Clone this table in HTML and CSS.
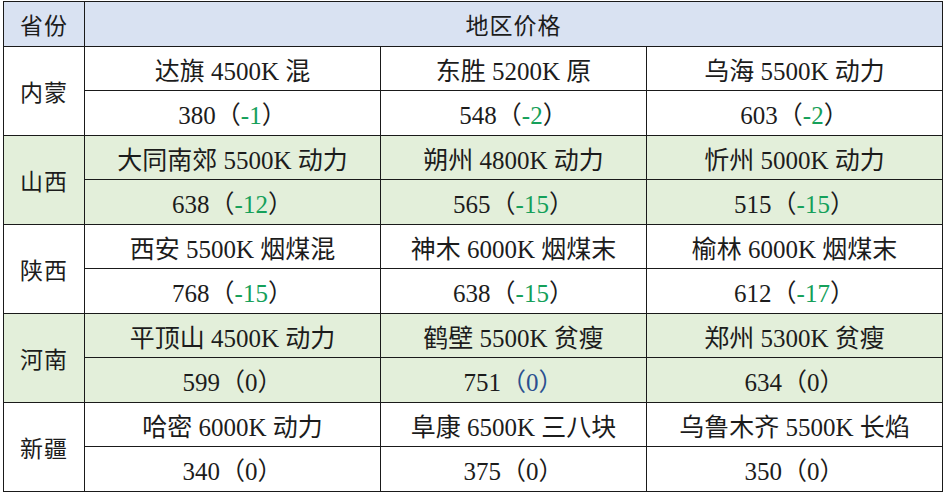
FILE: index.html
```html
<!DOCTYPE html>
<html lang="zh">
<head>
<meta charset="utf-8">
<link rel="stylesheet" href="styles.css">
</head>
<body>
<table class="price">
  <colgroup>
    <col class="c-prov"><col class="c-a"><col class="c-b"><col class="c-c">
  </colgroup>
  <tr class="head">
    <td class="prov">省份</td>
    <td colspan="3" class="title">地区价格</td>
  </tr>
  <tr>
    <td rowspan="2" class="prov">内蒙</td>
    <td>达旗 4500K 混</td><td>东胜 5200K 原</td><td>乌海 5500K 动力</td>
  </tr>
  <tr>
    <td>380（<span class="down">-1</span>）</td><td>548（<span class="down">-2</span>）</td><td>603（<span class="down">-2</span>）</td>
  </tr>
  <tr class="alt">
    <td rowspan="2" class="prov">山西</td>
    <td>大同南郊 5500K 动力</td><td>朔州 4800K 动力</td><td>忻州 5000K 动力</td>
  </tr>
  <tr class="alt">
    <td>638（<span class="down">-12</span>）</td><td>565（<span class="down">-15</span>）</td><td>515（<span class="down">-15</span>）</td>
  </tr>
  <tr>
    <td rowspan="2" class="prov">陕西</td>
    <td>西安 5500K 烟煤混</td><td>神木 6000K 烟煤末</td><td>榆林 6000K 烟煤末</td>
  </tr>
  <tr>
    <td>768（<span class="down">-15</span>）</td><td>638（<span class="down">-15</span>）</td><td>612（<span class="down">-17</span>）</td>
  </tr>
  <tr class="alt">
    <td rowspan="2" class="prov">河南</td>
    <td>平顶山 4500K 动力</td><td>鹤壁 5500K 贫瘦</td><td>郑州 5300K 贫瘦</td>
  </tr>
  <tr class="alt">
    <td>599（0）</td><td>751<span class="flat">（0）</span></td><td>634（0）</td>
  </tr>
  <tr>
    <td rowspan="2" class="prov">新疆</td>
    <td>哈密 6000K 动力</td><td>阜康 6500K 三八块</td><td>乌鲁木齐 5500K 长焰</td>
  </tr>
  <tr>
    <td>340（0）</td><td>375（0）</td><td>350（0）</td>
  </tr>
</table>
</body>
</html>
```
FILE: styles.css
```css
html, body {
  margin: 0;
  padding: 0;
  background: #ffffff;
}
body {
  padding: 1px 0 0 3px;
}
.price {
  border-collapse: collapse;
  width: 939px;
  table-layout: fixed;
  font-family: "Liberation Serif", "Noto Sans CJK SC", serif;
  font-size: 25px;
  color: #1c1c1c;
}
.c-prov { width: 81px; }
.c-a { width: 296px; }
.c-b { width: 296px; }
.c-c { width: 296px; }
.c-b { width: 266px; }
.price td {
  border: 1.2px solid #1a1a1a;
  height: 37.5px;
  padding: 6px 0 0;
  text-align: center;
  vertical-align: middle;
  white-space: nowrap;
  line-height: 1;
}
.price .prov {
  font-size: 23px;
  letter-spacing: 1px;
}
.price .title {
  font-size: 23px;
  letter-spacing: 1px;
}
.head td {
  background: #d9e2f2;
}
.alt td {
  background: #e3efda;
}
.down {
  color: #15a05a;
}
.flat {
  color: #2b4f8f;
}
```
